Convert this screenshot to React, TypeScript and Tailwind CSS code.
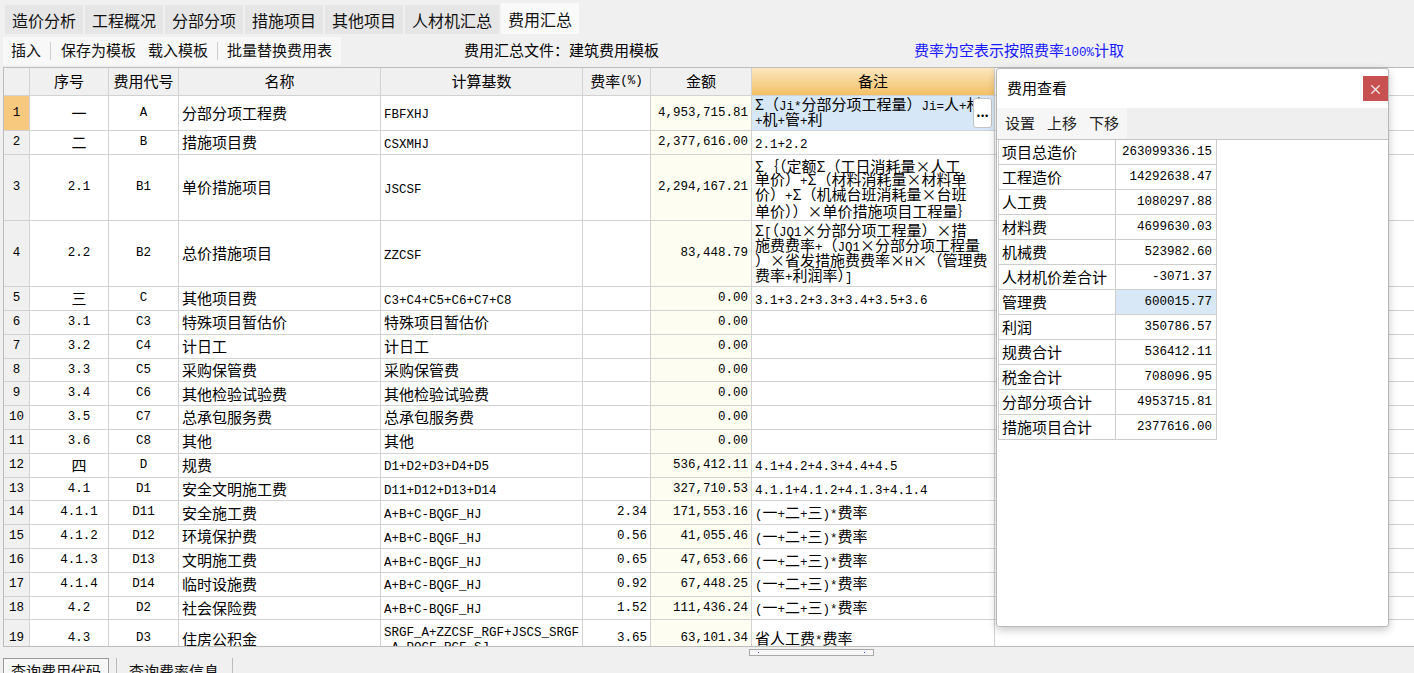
import React from 'react'

type Row = {
  n: number
  seq: string
  code: string
  name: string
  base: string[]
  rate?: string
  amt: string
  note?: string[]
  h: string
}

const rows: Row[] = [
  { n: 1, seq: '一', code: 'A', name: '分部分项工程费', base: ['FBFXHJ'], amt: '4,953,715.81', note: ['Σ（Ji*分部分项工程量）Ji=人+材', '+机+管+利'], h: 'h-[35px]' },
  { n: 2, seq: '二', code: 'B', name: '措施项目费', base: ['CSXMHJ'], amt: '2,377,616.00', note: ['2.1+2.2'], h: 'h-[24px]' },
  {
    n: 3, seq: '2.1', code: 'B1', name: '单价措施项目', base: ['JSCSF'], amt: '2,294,167.21',
    note: ['Σ｛（定额Σ（工日消耗量×人工', '单价）+Σ（材料消耗量×材料单', '价）+Σ（机械台班消耗量×台班', '单价））×单价措施项目工程量｝'],
    h: 'h-[66px]',
  },
  {
    n: 4, seq: '2.2', code: 'B2', name: '总价措施项目', base: ['ZZCSF'], amt: '83,448.79',
    note: ['Σ[（JQ1×分部分项工程量）×措', '施费费率+（JQ1×分部分项工程量', '）×省发措施费费率×H×（管理费', '费率+利润率）]'],
    h: 'h-[66px]',
  },
  { n: 5, seq: '三', code: 'C', name: '其他项目费', base: ['C3+C4+C5+C6+C7+C8'], amt: '0.00', note: ['3.1+3.2+3.3+3.4+3.5+3.6'], h: 'h-[24px]' },
  { n: 6, seq: '3.1', code: 'C3', name: '特殊项目暂估价', base: ['特殊项目暂估价'], amt: '0.00', h: 'h-[23.8px]' },
  { n: 7, seq: '3.2', code: 'C4', name: '计日工', base: ['计日工'], amt: '0.00', h: 'h-[23.8px]' },
  { n: 8, seq: '3.3', code: 'C5', name: '采购保管费', base: ['采购保管费'], amt: '0.00', h: 'h-[23.8px]' },
  { n: 9, seq: '3.4', code: 'C6', name: '其他检验试验费', base: ['其他检验试验费'], amt: '0.00', h: 'h-[23.8px]' },
  { n: 10, seq: '3.5', code: 'C7', name: '总承包服务费', base: ['总承包服务费'], amt: '0.00', h: 'h-[23.8px]' },
  { n: 11, seq: '3.6', code: 'C8', name: '其他', base: ['其他'], amt: '0.00', h: 'h-[23.8px]' },
  { n: 12, seq: '四', code: 'D', name: '规费', base: ['D1+D2+D3+D4+D5'], amt: '536,412.11', note: ['4.1+4.2+4.3+4.4+4.5'], h: 'h-[23.8px]' },
  { n: 13, seq: '4.1', code: 'D1', name: '安全文明施工费', base: ['D11+D12+D13+D14'], amt: '327,710.53', note: ['4.1.1+4.1.2+4.1.3+4.1.4'], h: 'h-[23.8px]' },
  { n: 14, seq: '4.1.1', code: 'D11', name: '安全施工费', base: ['A+B+C-BQGF_HJ'], rate: '2.34', amt: '171,553.16', note: ['(一+二+三)*费率'], h: 'h-[23.8px]' },
  { n: 15, seq: '4.1.2', code: 'D12', name: '环境保护费', base: ['A+B+C-BQGF_HJ'], rate: '0.56', amt: '41,055.46', note: ['(一+二+三)*费率'], h: 'h-[23.8px]' },
  { n: 16, seq: '4.1.3', code: 'D13', name: '文明施工费', base: ['A+B+C-BQGF_HJ'], rate: '0.65', amt: '47,653.66', note: ['(一+二+三)*费率'], h: 'h-[23.8px]' },
  { n: 17, seq: '4.1.4', code: 'D14', name: '临时设施费', base: ['A+B+C-BQGF_HJ'], rate: '0.92', amt: '67,448.25', note: ['(一+二+三)*费率'], h: 'h-[23.8px]' },
  { n: 18, seq: '4.2', code: 'D2', name: '社会保险费', base: ['A+B+C-BQGF_HJ'], rate: '1.52', amt: '111,436.24', note: ['(一+二+三)*费率'], h: 'h-[23.8px]' },
  { n: 19, seq: '4.3', code: 'D3', name: '住房公积金', base: ['SRGF_A+ZZCSF_RGF+JSCS_SRGF', '_A-PQGF_RGF_SJ'], rate: '3.65', amt: '63,101.34', note: ['省人工费*费率'], h: 'h-[38px]' },
]

const summary = [
  ['项目总造价', '263099336.15'],
  ['工程造价', '14292638.47'],
  ['人工费', '1080297.88'],
  ['材料费', '4699630.03'],
  ['机械费', '523982.60'],
  ['人材机价差合计', '-3071.37'],
  ['管理费', '600015.77'],
  ['利润', '350786.57'],
  ['规费合计', '536412.11'],
  ['税金合计', '708096.95'],
  ['分部分项合计', '4953715.81'],
  ['措施项目合计', '2377616.00'],
]

// ascii runs get a half-width mono face, the rest stays on the CJK face
function Txt({ s }: { s: string }) {
  const parts = s.split(/([\x20-\x7e]+)/).filter(Boolean)
  return (
    <>
      {parts.map((p, i) =>
        /^[\x20-\x7e]+$/.test(p) ? (
          <span key={i} className="font-['Liberation_Mono',monospace] text-[12.5px] whitespace-pre">
            {p}
          </span>
        ) : (
          <span key={i}>{p}</span>
        )
      )}
    </>
  )
}

function Lines({ lines }: { lines: string[] }) {
  if (lines.length === 1) {
    return (
      <div className="whitespace-nowrap">
        <Txt s={lines[0]} />
      </div>
    )
  }
  return (
    <div className="flex flex-col whitespace-nowrap">
      {lines.map((l, i) => (
        <div key={i} className="h-[15px] leading-[15px] flex items-center">
          <div className="whitespace-nowrap">
            <Txt s={l} />
          </div>
        </div>
      ))}
    </div>
  )
}

const tabs = ['造价分析', '工程概况', '分部分项', '措施项目', '其他项目', '人材机汇总']

function Header() {
  const th = 'flex items-center justify-center border-r border-[#d2d2d2] bg-[#f0f0f0] text-[15px]'
  return (
    <div className="flex h-[28px] border-b border-[#d2d2d2] shrink-0">
      <div className={`w-[26px] ${th}`} />
      <div className={`w-[79px] ${th}`}>序号</div>
      <div className={`w-[70px] ${th}`}>费用代号</div>
      <div className={`w-[202px] ${th}`}>名称</div>
      <div className={`w-[202px] ${th}`}>计算基数</div>
      <div className={`w-[68px] ${th}`}>
        <Txt s="费率(%)" />
      </div>
      <div className={`w-[101px] ${th}`}>金额</div>
      <div className="w-[243px] flex items-center justify-center border-r border-[#d2d2d2] bg-linear-to-b from-[#fce7bd] to-[#f2c064] text-[15px]">
        备注
      </div>
    </div>
  )
}

function TableRow({ r }: { r: Row }) {
  const td = 'flex items-center border-r border-[#d2d2d2] overflow-hidden text-[15px]'
  return (
    <div className={`flex ${r.h} border-b border-[#d2d2d2] shrink-0`}>
      <div className={`w-[26px] justify-center ${td} ${r.n === 1 ? 'bg-[#f7c97e]' : 'bg-[#f0f0f0]'}`}>
        <Txt s={String(r.n)} />
      </div>
      <div className={`w-[79px] justify-center pl-[20px] ${td}`}>
        <Txt s={r.seq} />
      </div>
      <div className={`w-[70px] justify-center ${td}`}>
        <Txt s={r.code} />
      </div>
      <div className={`w-[202px] pl-[3px] ${td}`}>{r.name}</div>
      <div className={`w-[202px] pl-[3px] ${td}`}>
        <Lines lines={r.base} />
      </div>
      <div className={`w-[68px] justify-end pr-[3px] ${td}`}>{r.rate && <Txt s={r.rate} />}</div>
      <div className={`w-[101px] justify-end pr-[3px] bg-[#fdfdf1] ${td}`}>
        <Txt s={r.amt} />
      </div>
      <div className={`w-[243px] pl-[3px] relative ${td} ${r.n === 1 ? 'bg-[#d6e7f7]' : ''}`}>
        {r.note && <Lines lines={r.note} />}
        {r.n === 1 && (
          <div className="absolute right-[2px] top-[2px] w-[19px] h-[30px] bg-white border border-[#c4c4c4] rounded-[3px] flex items-center justify-center text-[13px] font-bold leading-none pb-[4px]">
            ...
          </div>
        )}
      </div>
    </div>
  )
}

function CostDialog() {
  return (
    <div className="absolute left-[992px] top-0 w-[393px] h-[559px] bg-white border border-[#b8b8b8] rounded-[3px] shadow-[0_3px_8px_rgba(0,0,0,0.22)] flex flex-col">
      <div className="h-[39px] flex items-center justify-between pl-[10px] shrink-0">
        <span className="text-[15px]">费用查看</span>
        <div className="w-[25px] h-[25px] bg-[#c75050] text-white flex items-center justify-center text-[14px]">
          ×
        </div>
      </div>
      <div className="h-[32px] flex bg-[#efefef] border-b border-[#c4c4c4] shrink-0">
        <div className="w-[130px] bg-[#f6f6f6] flex items-center gap-[12px] pl-[8px] text-[15px] text-[#222]">
          <span>设置</span>
          <span>上移</span>
          <span>下移</span>
        </div>
      </div>
      <div className="flex flex-col pl-[1px]">
        {summary.map(([k, v]) => (
          <div key={k} className="flex h-[25px] shrink-0">
            <div className="w-[118px] border-l border-r border-b border-[#cdcdcd] flex items-center pl-[3px] text-[15px]">
              {k}
            </div>
            <div
              className={`w-[101px] border-r border-b border-[#cdcdcd] flex items-center justify-end pr-[4px] ${
                k === '管理费' ? 'bg-[#d8e8f7]' : ''
              }`}
            >
              <Txt s={v} />
            </div>
          </div>
        ))}
      </div>
    </div>
  )
}

export default function App() {
  return (
    <div className="w-[1414px] h-[673px] overflow-hidden bg-[#f0f0f0] flex flex-col font-['Noto_Sans_CJK_SC',sans-serif] text-black">
      {/* tab strip */}
      <div className="h-[34px] flex items-end gap-[2px] pl-[5px] shrink-0">
        {tabs.map((t) => (
          <div key={t} className="h-[29px] px-[7px] flex items-center bg-[#e6e6e6] text-[16px] text-[#111]">
            {t}
          </div>
        ))}
        <div className="h-[31px] px-[7px] flex items-center bg-[#fafafa] text-[16px] text-[#111]">费用汇总</div>
      </div>

      {/* toolbar */}
      <div className="h-[33px] flex items-center shrink-0">
        <div className="ml-[3px] h-[28px] w-[338px] bg-[#f8f8f8] flex items-center pl-[8px] text-[15px] text-[#111]">
          <span>插入</span>
          <div className="w-px h-[18px] bg-[#cfcfcf] ml-[9px] mr-[10px]" />
          <span>保存为模板</span>
          <span className="ml-[12px]">载入模板</span>
          <div className="w-px h-[18px] bg-[#cfcfcf] ml-[9px] mr-[9px]" />
          <span>批量替换费用表</span>
        </div>
        <div className="ml-[123px] text-[15px]">费用汇总文件：建筑费用模板</div>
        <div className="ml-[255px] text-[15px] text-[#1818ff]">
          <Txt s="费率为空表示按照费率100%计取" />
        </div>
      </div>

      {/* main grid */}
      <div className="relative h-[580px] ml-[3px] bg-white border-t border-b border-l border-[#bcbcbc] shrink-0">
        <div className="h-full flex flex-col overflow-hidden">
          <Header />
          {rows.map((r) => (
            <TableRow key={r.n} r={r} />
          ))}
        </div>
        <CostDialog />
      </div>

      {/* horizontal scroll */}
      <div className="h-[11px] flex items-center shrink-0">
        <div className="w-[749px]" />
        <div className="w-[125px] h-[7px] border border-[#a8a8a8] bg-[#f7f7f7] flex items-center justify-between px-[8px]">
          <div className="w-px h-px bg-[#3050d0]" />
          <div className="w-px h-px bg-[#3050d0]" />
        </div>
      </div>

      {/* bottom tabs */}
      <div className="flex-1 flex items-start text-[15px] text-[#111]">
        <div className="ml-[3px] h-[20px] px-[7px] border border-[#9a9a9a] bg-[#f7f7f7] flex items-start pt-[1px]">
          查询费用代码
        </div>
        <div className="w-px h-[18px] bg-[#bcbcbc] ml-[7px]" />
        <div className="ml-[12px] pt-[2px]">查询费率信息</div>
        <div className="w-px h-[18px] bg-[#bcbcbc] ml-[13px]" />
      </div>
    </div>
  )
}
